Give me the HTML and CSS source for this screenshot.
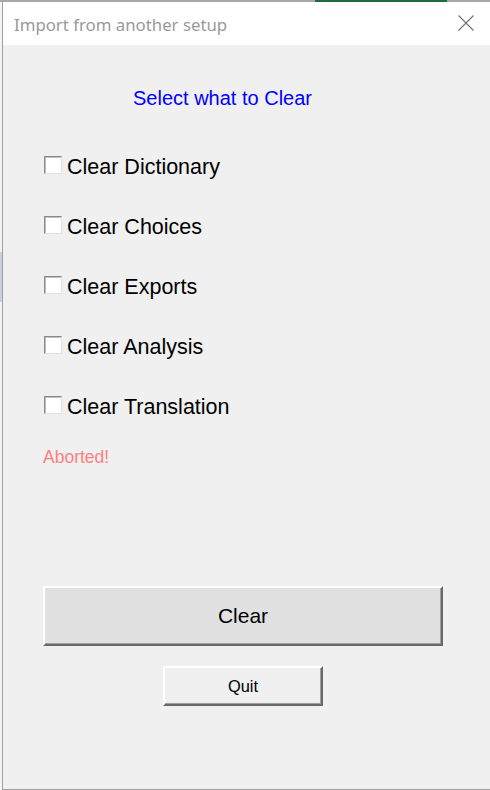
FILE: index.html
```html
<!DOCTYPE html>
<html>
<head>
<meta charset="utf-8">
<link rel="stylesheet" href="styles.css">
</head>
<body>
<div class="topstrip"></div>
<div class="stage">
  <div class="leftstrip"></div>
  <div class="window">
    <div class="titlebar">
      <span class="title">Import from another setup</span>
      <svg class="close" width="16" height="16" viewBox="0 0 16 16"><path d="M0.5 0.5 L15.5 15.5 M15.5 0.5 L0.5 15.5" stroke="#707070" stroke-width="1.1" fill="none"/></svg>
    </div>
    <div class="content">
      <div class="heading">Select what to Clear</div>
      <div class="options">
        <label class="option"><span class="box"></span><span class="label">Clear Dictionary</span></label>
        <label class="option"><span class="box"></span><span class="label">Clear Choices</span></label>
        <label class="option"><span class="box"></span><span class="label">Clear Exports</span></label>
        <label class="option"><span class="box"></span><span class="label">Clear Analysis</span></label>
        <label class="option"><span class="box"></span><span class="label">Clear Translation</span></label>
      </div>
      <div class="status">Aborted!</div>
      <button class="btn btn-clear">Clear</button>
      <button class="btn btn-quit">Quit</button>
    </div>
  </div>
</div>
</body>
</html>
```
FILE: styles.css
```css
html, body {
  margin: 0;
  padding: 0;
  width: 490px;
  height: 790px;
  overflow: hidden;
  background: #e8e8e8;
}
.topstrip {
  height: 2px;
  background: linear-gradient(to right, #a8a8a8 0, #a8a8a8 315px, #1e6b3c 315px, #1e6b3c 447px, #a8a8a8 447px);
}
.stage {
  display: flex;
  height: 788px;
}
.leftstrip {
  width: 2px;
  background: linear-gradient(to bottom, #f4f4f4 0, #f4f4f4 250px, #c9d0e0 250px, #c9d0e0 300px, #f4f4f4 300px);
}
.window {
  flex: 1;
  display: flex;
  flex-direction: column;
  border-left: 1px solid #a0a0a0;
  border-bottom: 1px solid #a0a0a0;
  background: #f0f0f0;
}
.titlebar {
  height: 43px;
  background: #ffffff;
  display: flex;
  align-items: center;
  justify-content: space-between;
  padding: 0 16px 0 11px;
  flex: none;
}
.title {
  font-family: "Noto Sans", sans-serif;
  font-size: 16.8px;
  color: #9a9a9a;
  margin-top: 2px;
}
.close {
  display: block;
  margin-top: -2px;
}
.content {
  display: flex;
  flex-direction: column;
  align-items: flex-start;
  padding-left: 40px;
}
.heading {
  font-family: "Liberation Sans", Arial, sans-serif;
  font-size: 20px;
  line-height: 24px;
  color: #0000ff;
  margin-top: 41px;
  margin-left: 90px;
}
.options {
  display: flex;
  flex-direction: column;
  gap: 42px;
  margin-top: 46px;
}
.option {
  display: flex;
  align-items: center;
  height: 18px;
  margin-left: 1px;
}
.box {
  width: 18px;
  height: 18px;
  box-sizing: border-box;
  background: #ffffff;
  border-top: 1px solid #8a8a8a;
  border-left: 1px solid #8a8a8a;
  border-right: 1px solid #e0e0e0;
  border-bottom: 1px solid #e0e0e0;
  box-shadow: inset 1px 1px 0 #c0c0c0;
  flex: none;
}
.label {
  font-family: "Liberation Sans", Arial, sans-serif;
  font-size: 21.5px;
  line-height: 24px;
  color: #000000;
  margin-left: 5px;
  margin-top: 4px;
  white-space: nowrap;
}
.status {
  font-family: "Liberation Sans", Arial, sans-serif;
  font-size: 17.5px;
  line-height: 20px;
  color: #ff8080;
  margin-top: 33px;
}
.btn {
  font-family: "Liberation Sans", Arial, sans-serif;
  color: #000000;
  box-sizing: border-box;
  border-top: 2px solid #ffffff;
  border-left: 2px solid #ffffff;
  border-right: 2px solid #696969;
  border-bottom: 2px solid #696969;
  box-shadow: inset -1px -1px 0 #a0a0a0;
  padding: 0;
  margin: 0;
  cursor: default;
}
.btn-clear {
  width: 400px;
  height: 60px;
  background: #e1e1e1;
  font-size: 21px;
  margin-top: 119px;
}
.btn-quit {
  width: 160px;
  height: 40px;
  background: #f0f0f0;
  font-size: 16.4px;
  margin-top: 20px;
  margin-left: 120px;
}
```
